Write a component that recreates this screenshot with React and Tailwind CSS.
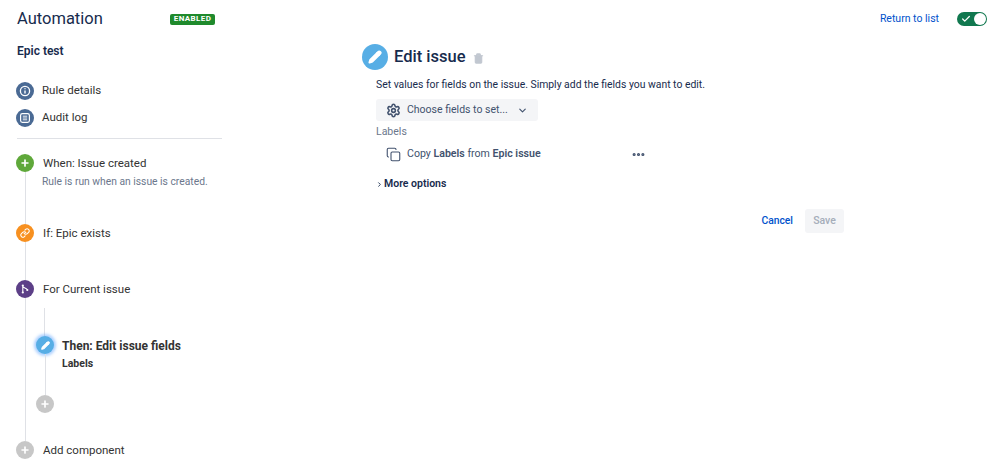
import { Check, ChevronDown, ChevronRight, Copy, Link, Pencil, Plus, Settings, Trash2, MoreHorizontal } from "lucide-react";

const FONT = "font-['Roboto','Liberation_Sans',sans-serif]";

const Dot = ({ color, size = "w-[18px] h-[18px]", className = "", children }) => (
  <span className={`flex items-center justify-center rounded-full shrink-0 text-white ${size} ${color} ${className}`}>
    {children}
  </span>
);

const InfoGlyph = () => (
  <svg width="12" height="12" viewBox="0 0 12 12" fill="none" stroke="white">
    <circle cx="6" cy="6" r="4.6" strokeWidth="1.3" />
    <path d="M6 5.4v3" strokeWidth="1.4" />
    <path d="M6 3.3v1" strokeWidth="1.4" />
  </svg>
);

const LogGlyph = () => (
  <svg width="12" height="12" viewBox="0 0 12 12" fill="none" stroke="white">
    <rect x="1.6" y="1.6" width="8.8" height="8.8" rx="1.8" strokeWidth="1.2" />
    <path d="M3.8 4.2h4.4M3.8 6h4.4M3.8 7.8h4.4" strokeWidth="0.9" />
  </svg>
);

const BranchGlyph = () => (
  <svg width="12" height="12" viewBox="0 0 12 12" fill="white" stroke="white">
    <path d="M3.8 2.5v7M3.8 3.2c0 2 4.2 1.4 4.4 3.6" strokeWidth="1.1" fill="none" />
    <circle cx="3.8" cy="2.5" r="1.1" stroke="none" />
    <circle cx="3.8" cy="9.5" r="1.1" stroke="none" />
    <circle cx="8.3" cy="7" r="1.1" stroke="none" />
  </svg>
);

// one step of the rule: dot + label, with the timeline running on below the dot
const Step = ({ color, icon, height, line = true, children }) => (
  <div className={`flex gap-[9px] -ml-[1px] ${height}`}>
    <div className="flex flex-col items-center w-[18px]">
      <Dot color={color}>{icon}</Dot>
      {line && <div className="w-[1px] flex-1 bg-[#dfe1e6]" />}
    </div>
    <div className="min-w-0">{children}</div>
  </div>
);

export default function App() {
  return (
    <div className={`w-[999px] h-[468px] overflow-hidden bg-white text-[#172b4d] ${FONT}`}>
      <header className="h-[38px] flex items-center pl-[17px] pr-[12px]">
        <h1 className="w-[153px] text-[16.5px] leading-[24px] text-[#172b4d]">Automation</h1>
        <span className="h-[11px] w-[45px] flex items-center justify-center rounded-[2px] bg-[#1f8a2c] text-white text-[8px] font-bold tracking-[0.4px]">
          ENABLED
        </span>
        <a className="ml-auto text-[10.5px] text-[#0052cc]">Return to list</a>
        <div className="ml-[18px] w-[30px] h-[14px] rounded-full bg-[#11784f] flex items-center justify-between pl-[2px] pr-[1px]">
          <Check size={10} strokeWidth={3} className="ml-[2px] text-white" />
          <span className="w-[12px] h-[12px] rounded-full bg-white" />
        </div>
      </header>

      <div className="flex">
        <aside className="w-[205px] ml-[17px] mr-[140px] pt-[5px] shrink-0">
          <h2 className="text-[12px] leading-[16px] font-semibold text-[#172b4d] mb-[18px]">Epic test</h2>

          <div className="flex items-center gap-[8px] -ml-[1px] h-[27px] text-[11.5px] text-[#333333]">
            <Dot color="bg-[#4a6a94]">
              <InfoGlyph />
            </Dot>
            Rule details
          </div>
          <div className="flex items-center gap-[8px] -ml-[1px] h-[27px] text-[11.5px] text-[#333333]">
            <Dot color="bg-[#4a6a94]">
              <LogGlyph />
            </Dot>
            Audit log
          </div>
          <div className="h-[1px] bg-[#dfe1e6] mt-[7px] mb-[15px]" />

          <Step color="bg-[#5fa83a]" height="h-[70px]" icon={<Plus size={10} strokeWidth={4} />}>
            <p className="text-[11.5px] leading-[18px] text-[#333333]">When: Issue created</p>
            <p className="-ml-[1px] mt-[2px] text-[10.3px] leading-[16px] text-[#6b778c] whitespace-nowrap">Rule is run when an issue is created.</p>
          </Step>
          <Step color="bg-[#f79020]" height="h-[56px]" icon={<Link size={10} strokeWidth={2.5} />}>
            <p className="text-[11.5px] leading-[18px] text-[#333333]">If: Epic exists</p>
          </Step>
          <Step color="bg-[#5c3f87]" height="h-[161px]" icon={<BranchGlyph />}>
            <p className="text-[11.5px] leading-[18px] text-[#333333]">For Current issue</p>
            <div className="-ml-[7px] mt-[10px] flex flex-col">
              <div className="ml-[8px] w-[1px] h-[28px] bg-[#dfe1e6]" />
              <div className="flex gap-[8px]">
                <div className="flex flex-col items-center w-[18px] h-[59px]">
                  <Dot color="bg-[#57aee5]" className="shadow-[0_0_3px_2px_rgba(76,154,255,0.45)]">
                    <Pencil size={9} strokeWidth={3} fill="white" />
                  </Dot>
                  <div className="w-[1px] flex-1 bg-[#dfe1e6]" />
                </div>
                <div className="pt-[1px]">
                  <p className="text-[12px] leading-[18px] font-bold text-[#333333] whitespace-nowrap">Then: Edit issue fields</p>
                  <p className="text-[10.5px] leading-[18px] font-bold text-[#333333]">Labels</p>
                </div>
              </div>
              <Dot color="bg-[#c7c7c7]">
                <Plus size={10} strokeWidth={4} />
              </Dot>
            </div>
          </Step>
          <Step color="bg-[#c7c7c7]" height="h-[18px]" line={false} icon={<Plus size={10} strokeWidth={4} />}>
            <p className="text-[11.5px] leading-[18px] text-[#333333]">Add component</p>
          </Step>
        </aside>

        <main className="w-[482px] pt-[6px]">
          <div className="flex items-center h-[26px]">
            <Dot color="bg-[#57aee5]" size="w-[26px] h-[26px]">
              <Pencil size={14} strokeWidth={2.5} fill="white" />
            </Dot>
            <h2 className="ml-[6px] text-[16.5px] leading-[24px] font-medium text-[#172b4d]">Edit issue</h2>
            <Trash2 size={11} strokeWidth={2.5} fill="#c1c7d0" className="ml-[8px] mt-[2px] text-[#c1c7d0]" />
          </div>

          <div className="pl-[14px]">
            <p className="mt-[7px] text-[10.4px] leading-[16px] text-[#172b4d]">
              Set values for fields on the issue. Simply add the fields you want to edit.
            </p>
            <button className="mt-[6px] w-[162px] h-[22px] flex items-center rounded-[3px] bg-[#f4f5f7] pl-[10px] text-[10.5px] text-[#42526e]">
              <Settings size={15} strokeWidth={2.5} className="text-[#42526e]" />
              <span className="ml-[6px]">Choose fields to set...</span>
              <ChevronDown size={11} strokeWidth={2.5} className="ml-[9px]" />
            </button>
            <p className="mt-[3px] text-[10.5px] leading-[16px] text-[#6b778c]">Labels</p>
            <div className="mt-[6px] h-[16px] flex items-center pl-[10px] text-[10.6px] text-[#42526e]">
              <Copy size={15} strokeWidth={1.75} />
              <span className="ml-[6px] w-[224px]">
                Copy <b className="font-semibold">Labels</b> from <b className="font-semibold">Epic issue</b>
              </span>
              <MoreHorizontal size={15} strokeWidth={3} className="text-[#42526e]" />
            </div>
            <div className="mt-[14px] h-[16px] flex items-center text-[10.5px] font-semibold text-[#172b4d]">
              <ChevronRight size={7} strokeWidth={3} className="mr-[1px]" />
              More options
            </div>
            <div className="mt-[17px] flex items-center justify-end">
              <a className="text-[10.3px] font-medium text-[#0052cc]">Cancel</a>
              <button className="ml-[12px] w-[39px] h-[24px] rounded-[3px] bg-[#f4f5f7] text-[10.5px] font-medium text-[#a5adba]">Save</button>
            </div>
          </div>
        </main>
      </div>
    </div>
  );
}
